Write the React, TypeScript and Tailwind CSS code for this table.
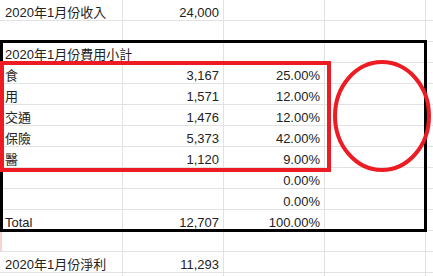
type Row = { a?: string; b?: string; c?: string; overflow?: boolean };

const rows: Row[] = [
  { a: "2020年1月份收入", b: "24,000" },
  {},
  { a: "2020年1月份費用小計", overflow: true },
  { a: "食", b: "3,167", c: "25.00%" },
  { a: "用", b: "1,571", c: "12.00%" },
  { a: "交通", b: "1,476", c: "12.00%" },
  { a: "保險", b: "5,373", c: "42.00%" },
  { a: "醫", b: "1,120", c: "9.00%" },
  { c: "0.00%" },
  { c: "0.00%" },
  { a: "Total", b: "12,707", c: "100.00%" },
  {},
  { a: "2020年1月份淨利", b: "11,293" },
  {},
];

const cell = "h-[21px] shrink-0 border-b border-[#e2e2e2] flex items-end leading-[15px]";

export default function App() {
  return (
    <div
      className="relative w-[433px] h-[276px] overflow-hidden bg-white text-[13px] text-[#222]"
      style={{ fontFamily: '"Liberation Sans", Arial, "Noto Sans CJK TC", sans-serif' }}
    >
      <div className="flex flex-col">
        {rows.map((r, i) => (
          <div key={i} className="flex">
            <div
              className={`${cell} w-[123px] pl-[5px] whitespace-nowrap ${
                r.overflow ? "border-r border-r-transparent" : "border-r"
              }`}
            >
              <span className={r.overflow ? "relative z-10" : ""}>{r.a}</span>
            </div>
            <div className={`${cell} w-[101px] border-r justify-end pr-[4px]`}>{r.b}</div>
            <div className={`${cell} w-[101px] border-r justify-end pr-[4px]`}>{r.c}</div>
            <div className={`${cell} w-[101px] border-r`} />
            <div className={`${cell} flex-1`} />
          </div>
        ))}
      </div>

      {/* faint mark at left edge */}
      <div className="absolute left-0 top-[231px] w-[2px] h-[20px] bg-[#f7d4d4]" />

      {/* black outline */}
      <div className="absolute left-0 top-[40px] w-[427px] h-[192px] border-[3px] border-black" />

      {/* red outline */}
      <div className="absolute left-0 top-[61px] w-[331px] h-[111px] border-[4px] border-[#ed1c24]" />

      {/* red ellipse */}
      <svg className="absolute left-[331px] top-[58px]" width="102" height="116" viewBox="0 0 102 116">
        <ellipse cx="51" cy="58" rx="47" ry="54" fill="none" stroke="#ed1c24" strokeWidth="4" />
      </svg>
    </div>
  );
}
